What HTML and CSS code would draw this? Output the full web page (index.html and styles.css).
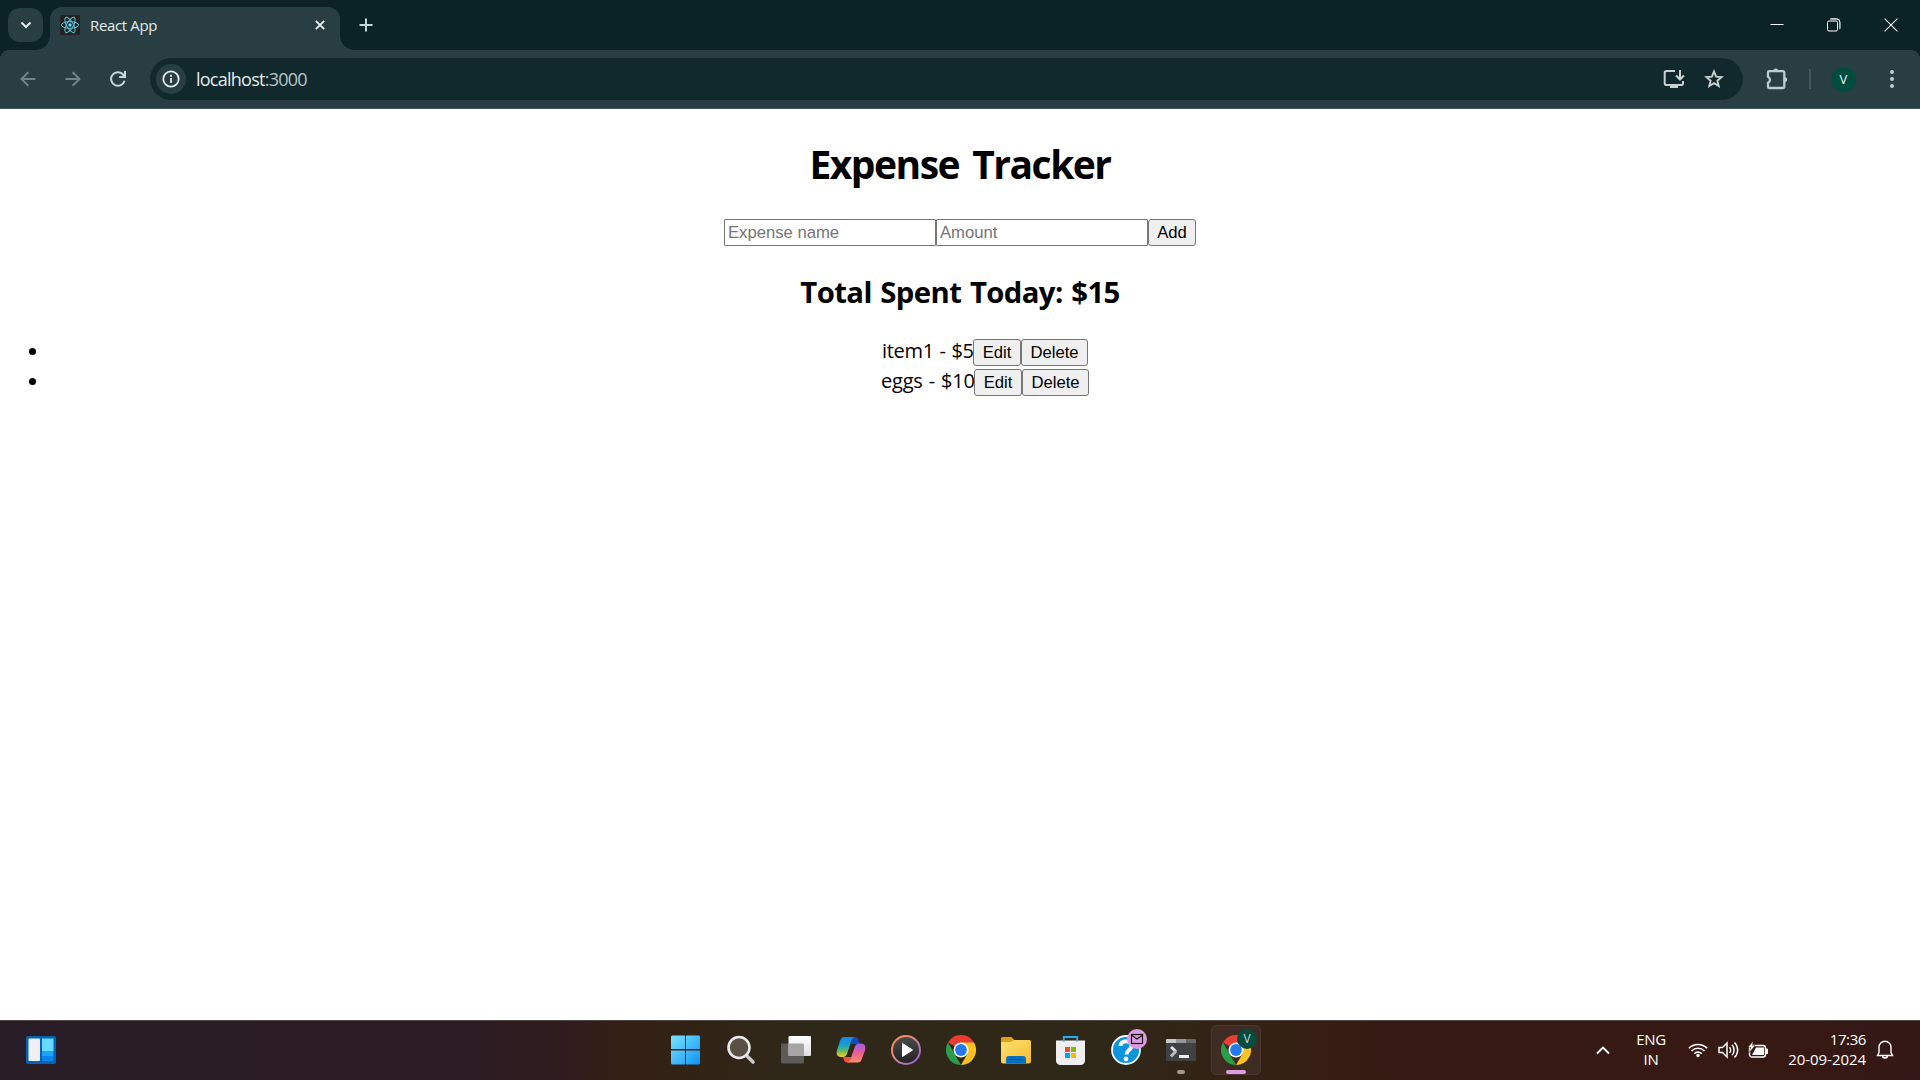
FILE: index.html
```html
<!DOCTYPE html>
<html lang="en">
<head>
<meta charset="utf-8">
<title>React App</title>
<link rel="stylesheet" href="styles.css">
</head>
<body>
<header class="tabstrip">
  <button class="tab-search" aria-label="Search tabs"><svg width="12" height="8" viewBox="0 0 12 8"><path d="M1.500 1.500 6 6l4.500-4.500" fill="none" stroke="#e4ecec" stroke-width="2"/></svg></button>
  <div class="tab">
    <svg class="favicon" width="20" height="20" viewBox="0 0 20 20"><rect width="20" height="20" rx="1" fill="#222"/><g fill="none" stroke="#58c4dc" stroke-width="1"><ellipse cx="10" cy="10" rx="8.600" ry="3.300"/><ellipse cx="10" cy="10" rx="8.600" ry="3.300" transform="rotate(60 10 10)"/><ellipse cx="10" cy="10" rx="8.600" ry="3.300" transform="rotate(120 10 10)"/></g><circle cx="10" cy="10" r="1.700" fill="#61dafb"/></svg>
    <span class="tab-title">React App</span>
    <svg class="tab-close" width="10" height="10" viewBox="0 0 10 10"><path d="m.8.8 8.400 8.400m0-8.400L.8 9.200" stroke="#e4ecec" stroke-width="1.900"/></svg>
  </div>
  <svg class="new-tab" width="14" height="14" viewBox="0 0 14 14"><path d="M7 .5v13M.5 7h13" stroke="#c2d8da" stroke-width="2"/></svg>
  <div class="window-controls">
    <svg width="14" height="14" viewBox="0 0 14 14"><path d="M.5 6.500h13" stroke="#fff"/></svg>
    <svg width="14" height="14" viewBox="0 0 14 14"><path d="M3 .5h7a3 3 0 0 1 3 3v7l-1 2V4a2 2 0 0 0-2-2H3z" fill="#6a7a7c"/><rect x=".5" y="3" width="10" height="10" rx="1.500" fill="#0b2327" stroke="#fff"/><path d="M3.500.8h6a3.500 3.500 0 0 1 3.500 3.500v6.500" fill="none" stroke="#fff"/></svg>
    <svg width="14" height="14" viewBox="0 0 14 14"><path d="m.6.6 12.800 12.800m0-12.800L.6 13.400" stroke="#fff" stroke-width="1.100"/></svg>
  </div>
</header>
<nav class="toolbar">
  <div class="nav-buttons">
    <svg width="16" height="16" viewBox="0 0 16 16" fill="none" stroke="#6f8487" stroke-width="2"><path d="M15.500 8H1.800M8.300 1.200 1.500 8l6.800 6.800"/></svg>
    <svg width="16" height="16" viewBox="0 0 16 16" fill="none" stroke="#6f8487" stroke-width="2"><path d="M.5 8h13.700M7.700 1.200 14.500 8l-6.800 6.800"/></svg>
    <svg width="16" height="16" viewBox="0 0 16 16" fill="none" stroke="#c2d8da" stroke-width="2"><path d="M14.500 9.700A6.800 6.800 0 1 1 12.800 3.200L14.300 5M15 0v6H9.200"/></svg>
  </div>
  <div class="omnibox">
    <span class="site-info"><svg width="18" height="18" viewBox="0 0 18 18"><circle cx="9" cy="9" r="7.700" fill="none" stroke="#e4ecec" stroke-width="1.800"/><path d="M9 8v5M9 4.800v2" stroke="#e4ecec" stroke-width="1.800"/></svg></span>
    <span class="url">localhost<span class="port">:3000</span></span>
    <svg class="install" width="22" height="20" viewBox="0 0 22 20"><path d="M12 2H3.500A1.800 1.800 0 0 0 1.700 3.800v10.400A1.800 1.800 0 0 0 3.500 16h14.700a1.800 1.800 0 0 0 1.800-1.800V12M17 1v9M13 6.500l4 4 4-4" fill="none" stroke="#c8d0d0" stroke-width="2"/><path d="M7 16h8v3H7z" fill="#c8d0d0"/></svg>
    <svg class="star" width="20" height="20" viewBox="0 0 20 20"><path d="m10 2.500 2.100 5.100 5.500.5-4.200 3.600 1.300 5.400-4.700-2.900-4.700 2.900 1.300-5.400-4.200-3.600 5.500-.5z" fill="none" stroke="#c8d0d0" stroke-width="1.900"/></svg>
  </div>
  <svg class="extensions" width="22" height="22" viewBox="0 0 22 22"><path d="M3.200 3.200h13.600a1.500 1.500 0 0 1 1.500 1.500v13.800a1.500 1.500 0 0 1-1.500 1.500H3.200a1.200 1.200 0 0 1-1.200-1.200v-3.900a3.400 3.400 0 0 0 0-6.200V4.400A1.200 1.200 0 0 1 3.200 3.200z" fill="none" stroke="#b5d0d4" stroke-width="2.300"/><path d="M7.200 3a2.600 2.600 0 0 1 5.200 0zM18.500 9a2.600 2.600 0 0 1 0 5.200z" fill="#b5d0d4"/></svg>
  <span class="divider"></span>
  <span class="avatar">V</span>
  <svg class="menu" width="4" height="18" viewBox="0 0 4 18" fill="#b5d0d4"><circle cx="2" cy="2" r="2"/><circle cx="2" cy="9" r="2"/><circle cx="2" cy="16" r="2"/></svg>
</nav>
<main class="page">
  <h1 class="title">Expense Tracker</h1>
  <form class="entry-form"><input class="field" type="text" placeholder="Expense name"><input class="field" type="text" placeholder="Amount"><button class="btn btn-short" type="button">Add</button></form>
  <h2 class="total">Total Spent Today: $15</h2>
  <ul class="expenses">
    <li class="expense"><span class="label label-item">item1 - $5</span><button class="btn btn-short">Edit</button><button class="btn btn-long">Delete</button></li>
    <li class="expense"><span class="label label-eggs">eggs - $10</span><button class="btn btn-short">Edit</button><button class="btn btn-long">Delete</button></li>
  </ul>
</main>
<footer class="taskbar">
  <svg class="widgets" width="30" height="28" viewBox="0 0 30 28"><rect width="30" height="28" rx="2" fill="#0762b4"/><rect x="2.500" y="2.500" width="11.500" height="22.500" rx="1" fill="#f0f0f2"/><path d="M16 2.500h11.500V15H16z" fill="#68d8ff"/><path d="M16 15h11.500v5H16z" fill="#1ba4fa"/><path d="M16 20h11.500v5H16z" fill="#0786ee"/></svg>
  <div class="apps">
    <span class="app"><svg width="30" height="30" viewBox="1 0 30 30"><defs><linearGradient id="win" gradientUnits="userSpaceOnUse" x1="0" y1="0" x2="29" y2="29"><stop stop-color="#7be8ff"/><stop offset="1" stop-color="#1294f6"/></linearGradient></defs><path d="M2 .5h13V14H1V1.500zM16 .5h13l1 1V14H16zM1 15.500h14v14H2l-1-1zM16 15.500h14v13l-1 1H16z" fill="url(#win)"/></svg></span>
    <span class="app"><svg width="30" height="30" viewBox="0 0 30 30"><path d="m20 20 7 7" stroke="#c9c9d2" stroke-width="3.600" stroke-linecap="round"/><circle cx="13" cy="12.500" r="10.500" fill="#5a5145" stroke="#e9e9ed" stroke-width="2.600"/></svg></span>
    <span class="app"><svg width="30" height="30" viewBox="0 0 30 30"><defs><linearGradient id="view" x2="0" y2="1"><stop stop-color="#fff"/><stop offset="1" stop-color="#dedede"/></linearGradient></defs><rect y="8.500" width="23" height="20" rx="1" fill="#5c5b58"/><rect x="7.500" y="1" width="22.500" height="20" rx="1" fill="url(#view)"/><path d="M7.500 8.500H22a1 1 0 0 1 1 1V21H7.500z" fill="#a5a5a3"/></svg></span>
    <span class="app"><svg width="30" height="30" viewBox="0 0 30 30"><defs><linearGradient id="copA" x2="0" y2="1"><stop stop-color="#1684e8"/><stop offset=".45" stop-color="#19a6ca"/><stop offset=".7" stop-color="#68b957"/><stop offset="1" stop-color="#f5cf20"/></linearGradient><linearGradient id="copB" x2="0" y2="1"><stop stop-color="#a15af2"/><stop offset=".5" stop-color="#ec5c94"/><stop offset="1" stop-color="#fe9167"/></linearGradient></defs><path d="M16 2h4c2.500 0 2.500 5 4 7h-9z" fill="#1449c6"/><path d="M7 22h8l-1 5.500h-3c-3 0-3-3-4-5.500z" fill="#f1503c"/><path d="M8 2h11c-3 1-4 4-5 8l-3 9c-1 2-2 3-4 3H5c-4 0-5-3-4-7l3-9c1-3 2-4 4-4z" fill="url(#copA)"/><path d="M22 27.500H11c3-1 4-4 5-8l3-8c1-2 2-3 4-3h2c4 0 5 3 4 7l-3 8c-1 3-2 4-4 4z" fill="url(#copB)"/></svg></span>
    <span class="app"><svg width="30" height="30" viewBox="0 0 30 30"><defs><linearGradient id="media" x2="1" y2="1"><stop stop-color="#ff913d"/><stop offset=".5" stop-color="#d6869b"/><stop offset="1" stop-color="#8758df"/></linearGradient><linearGradient id="dark" x2="0" y2="1"><stop stop-color="#4b4b4b"/><stop offset="1" stop-color="#222"/></linearGradient></defs><circle cx="15" cy="15" r="14" fill="url(#dark)" stroke="url(#media)" stroke-width="2"/><path d="M11.500 8.500 21.500 15l-10 6.500z" fill="#fff" stroke="#fff" stroke-linejoin="round"/></svg></span>
    <span class="app"><svg width="30" height="30" viewBox="0 0 30 30"><g id="chrome"><path d="M15 15 2 7.500A15 15 0 0 1 28 7.500z" fill="#ea3c30"/><path d="M2 7.500 8.500 18.700 15 30A15 15 0 0 1 2 7.500z" fill="#2b9c48"/><path d="M15 7.500h13A15 15 0 0 1 15 30l6.500-11.300z" fill="#fcc31f"/><circle cx="15" cy="15" r="7.500" fill="#fff"/><circle cx="15" cy="15" r="5.900" fill="#2678ee"/></g></svg></span>
    <span class="app"><svg width="30" height="30" viewBox="0 0 30 30"><defs><linearGradient id="folder" x2="1" y2="1"><stop stop-color="#ffe174"/><stop offset="1" stop-color="#f7bc2f"/></linearGradient></defs><path d="M0 3.500A1.500 1.500 0 0 1 1.500 2h9L13 4.500V8H0z" fill="#dea112"/><path d="M0 7h9.500l3.500-2h15.500A1.500 1.500 0 0 1 30 6.500v20a2 2 0 0 1-2 2H2a2 2 0 0 1-2-2z" fill="url(#folder)"/><path d="M5 28.500V24a3 3 0 0 1 3-3h14a3 3 0 0 1 3 3v4.500z" fill="#0871bf"/><path d="M8.500 24.500h13" stroke="#02539a"/></svg></span>
    <span class="app"><svg width="30" height="30" viewBox="0 0 30 30"><path d="M0 5.500h29v20a4.500 4.500 0 0 1-4.500 4.500h-20A4.500 4.500 0 0 1 0 25.500z" fill="#efeff0"/><path d="M7.800 6.500V2h13.400v4.500" fill="none" stroke="#27aef0" stroke-width="1.800"/><path d="M9 12h5v5H9z" fill="#f25022"/><path d="M15 12h5v5h-5z" fill="#7fba00"/><path d="M9 18h5v5H9z" fill="#00a4ef"/><path d="M15 18h5v5h-5z" fill="#ffb900"/></svg></span>
    <span class="app"><svg width="30" height="30" viewBox="0 0 30 30"><circle cx="15" cy="15" r="14" fill="#0a95dc" stroke="#f4fafd" stroke-width="1.800"/><path d="M9.500 11c0-6.500 11-6.500 11 0 0 4-5 4-5 8.500" fill="none" stroke="#fff" stroke-width="4"/><circle cx="15" cy="24" r="2.400" fill="#fff"/></svg><svg class="badge mail" width="20" height="20" viewBox="0 0 20 20"><circle cx="10" cy="10" r="10" fill="#dc9ce2"/><rect x="4.500" y="5.500" width="11" height="9" fill="none" stroke="#171017" stroke-width="1.200"/><path d="m5 6.500 5 3.500 5-3.500" fill="none" stroke="#171017" stroke-width="1.200"/></svg></span>
    <span class="app"><svg width="30" height="24" viewBox="0 0 30 24"><path d="M0 2a1 1 0 0 1 1-1h9v4H0z" fill="#c8c8c8"/><path d="M10 1h10v4H10z" fill="#969696"/><path d="M20 1h9a1 1 0 0 1 1 1v3H20z" fill="#676767"/><path d="M0 5h30v17a1 1 0 0 1-1 1H1a1 1 0 0 1-1-1z" fill="#404143"/><path d="m5 9 5 4.500" stroke="#e5e5e5" stroke-width="3"/><path d="m10 13-5 5.500" stroke="#bababa" stroke-width="3"/><path d="M13 18.500h10" stroke="#eee" stroke-width="3"/></svg><span class="indicator"></span></span>
    <span class="app app-active"><svg width="30" height="30" viewBox="0 0 30 30"><use href="#chrome"/></svg><span class="badge profile">V</span><span class="indicator indicator-wide"></span></span>
  </div>
  <div class="tray">
    <svg class="chevron" width="14" height="9" viewBox="0 0 14 9"><path d="m1 7.500 6-6 6 6" fill="none" stroke="#fff" stroke-width="1.900"/></svg>
    <div class="language"><span>ENG</span><span>IN</span></div>
    <svg class="wifi" width="20" height="16" viewBox="0 0 20 16" fill="none" stroke="#fff" stroke-width="1.600"><path d="M.8 6.300a13 13 0 0 1 18.400 0M3.500 9a9.200 9.200 0 0 1 13 0M6.200 11.700a5.400 5.400 0 0 1 7.600 0"/><circle cx="10" cy="13.500" r="1.700" fill="#fff" stroke="none"/></svg>
    <svg class="volume" width="21" height="18" viewBox="0 0 21 18" fill="none" stroke="#fff" stroke-width="1.500"><path d="M1 6.500h3.500L9 2v14l-4.500-4.500H1zM11.500 6.200a4 4 0 0 1 0 5.600M14 3.800a7.500 7.500 0 0 1 0 10.400M16.500 1.500a10.500 10.500 0 0 1 0 15"/></svg>
    <svg class="battery" width="21" height="18" viewBox="0 0 21 18"><rect x="1.500" y="4.500" width="16" height="11.500" rx="2.500" fill="none" stroke="#fff" stroke-width="1.400"/><path d="M8 6.500h8v7.500H4z" fill="#fff"/><path d="M18 8h1.500v4.500H18z" fill="#fff" stroke="#fff"/><path d="M5 0 0 6.500h2.500L1.500 11.500l5.500-7H4.500z" fill="#fff" stroke="#371913" stroke-width=".5"/></svg>
    <div class="clock"><span class="time">17:36</span><span class="date">20-09-2024</span></div>
    <svg class="bell" width="18" height="20" viewBox="0 0 18 20" fill="none" stroke="#fff" stroke-width="1.400"><path d="M3 12.500V7.200a6 6 0 0 1 12 0v5.300l1.500 3H1.500zM6.500 15.500a2.500 2.500 0 0 0 5 0"/></svg>
  </div>
</footer>
</body>
</html>
```
FILE: styles.css
```css
* { box-sizing: border-box; }
body {
  margin: 0;
  width: 1920px;
  height: 1080px;
  overflow: hidden;
  display: flex;
  flex-direction: column;
  background: #fff;
  font-family: "Open Sans", "Noto Sans", sans-serif;
}
svg { display: block; flex: none; }

.tabstrip {
  height: 50px;
  flex: none;
  display: flex;
  align-items: center;
  padding-left: 8px;
  background: #0b2327;
}
.tab-search {
  width: 35px;
  height: 34px;
  display: grid;
  place-items: center;
  padding: 0;
  border: 0;
  border-radius: 12px;
  background: #283e42;
}
.tab {
  position: relative;
  align-self: flex-end;
  width: 290px;
  height: 43px;
  margin-left: 7px;
  padding: 0 15px 7px 10px;
  display: flex;
  align-items: center;
  border-radius: 12px 12px 0 0;
  background: #283e42;
}
.tab::before, .tab::after {
  content: "";
  position: absolute;
  bottom: 0;
  width: 14px;
  height: 14px;
}
.tab::before { left: -14px; background: radial-gradient(circle at 0 0, transparent 13.5px, #283e42 14px); }
.tab::after { right: -14px; background: radial-gradient(circle at 100% 0, transparent 13.5px, #283e42 14px); }
.tab-title { margin-left: 10px; flex: 1; color: #e2eaea; font-size: 15px; letter-spacing: -.35px; }
.new-tab { margin-left: 18.5px; }
.window-controls { display: flex; gap: 43px; margin-left: auto; margin-right: 22px; }

.toolbar {
  height: 59px;
  flex: none;
  display: flex;
  align-items: center;
  border-bottom: 1px solid #42575b;
  background:
    radial-gradient(circle at 10px 10px, #283e42 10px, #0b2327 10.5px) 0 0 / 10px 10px no-repeat,
    radial-gradient(circle at 0 10px, #283e42 10px, #0b2327 10.5px) 100% 0 / 10px 10px no-repeat,
    #283e42;
}
.nav-buttons { display: flex; gap: 29px; margin-left: 19.5px; }
.omnibox {
  width: 1593px;
  height: 42px;
  margin-left: 24.5px;
  padding: 0 19px 0 6px;
  display: flex;
  align-items: center;
  border-radius: 21px;
  background: #11292d;
}
.site-info { width: 30px; height: 30px; display: grid; place-items: center; border-radius: 50%; background: #283e42; }
.url { flex: 1; margin-left: 10px; color: #e3eaea; font-size: 18px; letter-spacing: -.75px; }
.port { color: #b5c4c6; }
.star { margin-left: 19px; }
.extensions { margin-left: 23px; }
.divider { width: 2px; height: 20px; margin-left: 21px; background: #40585d; }
.avatar { width: 25px; height: 25px; margin-left: 20px; border-radius: 50%; background: #004d40; color: #e5f4f0; font-size: 13px; line-height: 25px; text-align: center; }
.menu { margin-left: 34px; }

.page { flex: 1; min-height: 0; padding-top: 27px; color: #000; text-align: center; }
.title { margin: 0; height: 56px; font-size: 39px; line-height: 56px; letter-spacing: -1.5px; word-spacing: 4.5px; }
.entry-form { display: flex; justify-content: center; margin-top: 27px; height: 27px; }
.field { width: 212px; height: 27px; margin: 0; padding: 1px 3px; border: 1px solid #767676; border-radius: 1px; font: 16.67px "Liberation Sans", sans-serif; }
.field::placeholder { color: #757575; }
.btn { height: 27px; margin: 0; padding: 0; border: 1px solid #767676; border-radius: 3px; background: #efefef; color: #000; font: 16.67px/24px "Liberation Sans", sans-serif; }
.btn-short { width: 48px; }
.btn-long { width: 67px; }
.total { margin: 26px 0 0; height: 42px; font-size: 29.3px; line-height: 41px; letter-spacing: -.6px; word-spacing: 1.6px; }
.expenses { margin: 25px 0 0; padding: 0 0 0 50px; list-style: none; }
.expense { position: relative; display: flex; justify-content: center; height: 30px; }
.expense::before { content: ""; position: absolute; left: -21px; top: 9px; width: 7px; height: 7px; border-radius: 50%; background: #000; }
.label { font-size: 20px; line-height: 24px; white-space: nowrap; text-align: left; }
.label-item { width: 91px; letter-spacing: -.3px; word-spacing: .8px; }
.label-eggs { width: 93px; letter-spacing: -.2px; word-spacing: 1px; }

.taskbar {
  height: 60px;
  flex: none;
  display: flex;
  align-items: center;
  padding-bottom: 1px;
  border-top: 1px solid #4c4542;
  background: linear-gradient(90deg, #281d26 0, #2d1c25 440px, #2f1c20 550px, #331f14 620px, #2f2718 780px, #2e2818 1080px, #342114 1250px, #371913 1420px, #371913 1780px, #331817 1920px);
}
.widgets { margin-left: 26px; }
.apps { display: flex; gap: 5px; margin-left: 605px; }
.app { position: relative; width: 50px; height: 50px; display: grid; place-items: center; border-radius: 5px; }
.app-active { background: #3e2b22; border: 1px solid #4b3731; }
.badge { position: absolute; }
.mail { left: 26px; top: 4px; }
.profile { left: 25px; top: 3px; width: 20px; height: 20px; border-radius: 50%; background: #064b40; color: #c0d7d2; font-size: 12px; line-height: 20px; text-align: center; }
.indicator { position: absolute; bottom: 1px; left: 21px; width: 8px; height: 4px; border-radius: 2px; background: #a09894; }
.indicator-wide { left: 14px; width: 20px; background: #dc9ce2; bottom: 0; }
.tray { display: flex; align-items: center; margin-left: auto; padding-right: 26px; color: #fff; font-size: 15px; line-height: 20px; }
.language { display: flex; flex-direction: column; width: 30px; margin-left: 26px; padding-bottom: 2px; align-items: center; letter-spacing: -.3px; }
.wifi { margin-left: 22px; }
.volume { margin-left: 10px; }
.battery { margin-left: 9px; }
.clock { display: flex; flex-direction: column; width: 79px; margin-left: 18px; padding-bottom: 3px; align-items: flex-end; letter-spacing: -.05px; white-space: nowrap; }
.time { letter-spacing: -.4px; }
.bell { margin-left: 10px; }
```
